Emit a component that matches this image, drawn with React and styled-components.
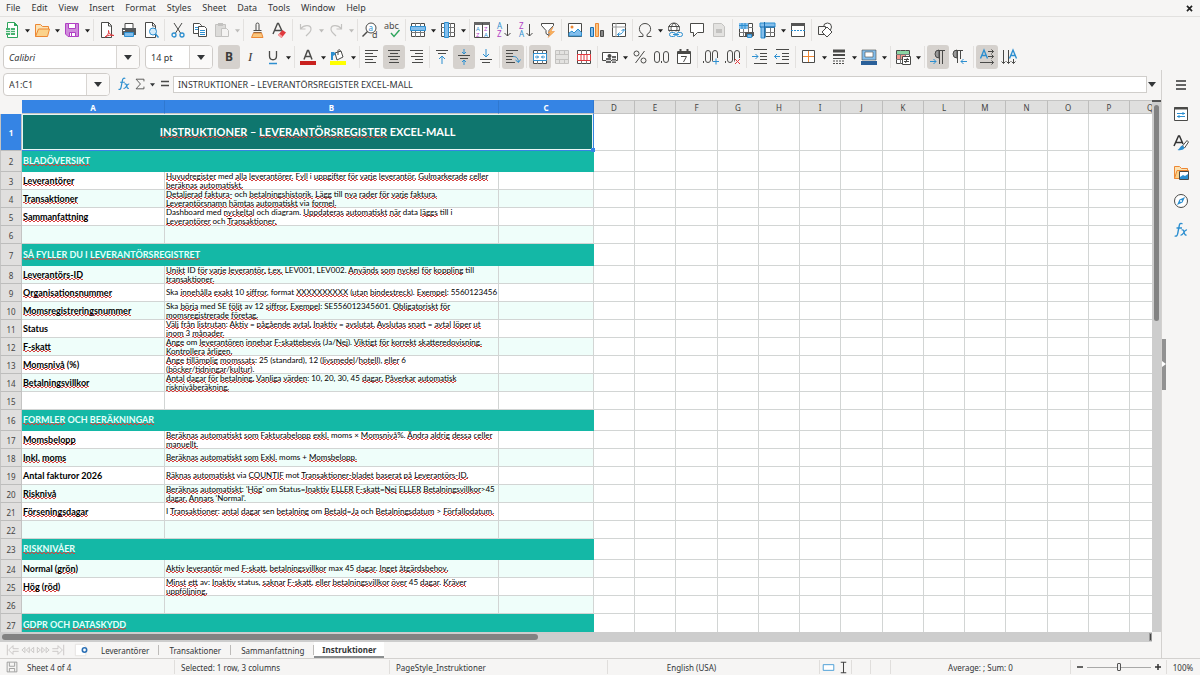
import React from 'react'
import styled, { createGlobalStyle } from 'styled-components'

const dark = '#4a4a48'
const blue = '#2d8fd0'
const pale = '#83beec'
const red = '#e0393e'
const orange = '#ed8733'
const purple = '#b13fc4'
const green = '#2ea55c'
const off = '#c3c2c0'

const GlobalStyle = createGlobalStyle`
    * {
        box-sizing: border-box;
    }
    body {
        margin: 0;
        background: #f6f5f4;
        color: #333638;
        font-family: "Noto Sans", sans-serif;
        font-size: 8px;
    }
    svg {
        overflow: visible;
    }
    button, input, select {
        font: inherit;
        color: inherit;
        margin: 0;
        padding: 0;
        border: 0;
        background: transparent;
        outline: none;
    }
`

const Window = styled.div`
    display: flex;
    flex-direction: column;
    height: 100vh;
    overflow: hidden;
`

const MenuBar = styled.nav`
    display: flex;
    flex: none;
    align-items: center;
    height: 16px;
    padding-left: 6px;
    gap: 11px;
    font-size: 9px;
`

const MenuItem = styled.button`
    line-height: 16px;
`

const CloseButton = styled.button`
    display: flex;
    margin: 0 6px 0 auto;
`

const Toolbar = styled.div`
    display: flex;
    flex: none;
    align-items: center;
    height: 27px;
    padding-left: ${props => props.$inset ? '3px' : '1px'};
    border-top: 1px solid ${props => props.$line ? '#e2e1df' : 'transparent'};
`

const ToolButton = styled.button`
    display: flex;
    flex: none;
    align-items: center;
    justify-content: center;
    width: 22px;
    height: 24px;
    border-radius: 3px;
    background: ${props => props.$active ? '#d5d1cd' : 'transparent'};
`

const MoreButton = styled.button`
    display: flex;
    flex: none;
    align-items: center;
    justify-content: center;
    width: 8px;
    height: 24px;
    color: ${props => props.disabled ? '#bdbcba' : '#222'};
`

const Separator = styled.span`
    flex: none;
    width: 1px;
    height: 22px;
    margin: ${props => props.$tight ? '0 1px 0 2px' : '0 2px'};
    background: #e3e1df;
`

const Combo = styled.div`
    display: grid;
    flex: none;
    grid-template-columns: 1fr 23px;
    width: ${props => props.width};
    height: ${props => props.$low ? '23px' : '24px'};
    margin-right: 5px;
    border: 1px solid #cfccc9;
    border-radius: 4px;
    background: #fff;
    font-size: 9px;
`

const ComboSelect = styled.select`
    grid-area: 1 / 1 / 2 / 3;
    appearance: none;
    padding-left: 5px;
    font-style: ${props => props.$italic ? 'italic' : 'normal'};
`

const ComboInput = styled.input`
    width: 100%;
    padding-left: 5px;
`

const ComboArrow = styled.span`
    display: flex;
    grid-area: 1 / 2 / 2 / 3;
    align-items: center;
    justify-content: center;
    border-left: 1px solid #d8d5d2;
    border-radius: 0 3px 3px 0;
    background: #faf9f8;
    pointer-events: none;
`

const ComboButton = styled.button`
    display: flex;
    align-items: center;
    justify-content: center;
    border-left: 1px solid #d8d5d2;
    border-radius: 0 3px 3px 0;
    background: #faf9f8;
`

const Workspace = styled.div`
    display: flex;
    flex: 1;
    min-height: 0;
    border-bottom: 1px solid #d3d1cf;
`

const Document = styled.main`
    display: flex;
    flex: 1;
    flex-direction: column;
    min-width: 0;
`

const FormulaBar = styled.div`
    display: flex;
    flex: none;
    align-items: center;
    height: 30px;
    padding: 0 4px 2px 3px;
`

const FormulaButton = styled.button`
    display: flex;
    flex: none;
    align-items: center;
    justify-content: center;
    width: ${props => props.width || '16px'};
    height: 22px;
`

const FormulaInput = styled.input`
    flex: 1;
    min-width: 0;
    height: 17px;
    padding: 0 4px;
    border: 1px solid #d0cecb;
    background: #fff;
    font-size: 9px;
`

const SheetArea = styled.div`
    display: grid;
    flex: 1;
    grid-template-columns: minmax(0, 1fr) 9px;
    grid-template-rows: minmax(0, 1fr) 10px;
    min-height: 0;
`

const SheetView = styled.div`
    overflow: hidden;
    background: #fff;
`

const Sheet = styled.table`
    table-layout: fixed;
    width: 1171px;
    border-collapse: separate;
    border-spacing: 0;
`

const ColumnHead = styled.th`
    height: 14px;
    padding: 0;
    border-right: 1px solid ${props => props.$selected ? '#2f78d0' : '#bdbdbc'};
    border-bottom: 1px solid #c4c4c3;
    border-top: 1px solid ${props => props.$selected ? '#3584e4' : '#c4c4c3'};
    background: ${props => props.$selected ? '#3584e4' : '#dfdfde'};
    color: ${props => props.$selected ? '#fff' : '#444'};
    font-weight: ${props => props.$selected ? '700' : '400'};
    line-height: 11px;
`

const Corner = styled.td`
    padding: 0;
    background: #f6f5f4;
`

const RowHead = styled.th`
    padding: 2px 0 0;
    border-right: 1px solid #c4c4c3;
    border-bottom: 1px solid #bdbdbc;
    border-left: 1px solid #c4c4c3;
    background: ${props => props.$selected ? '#3584e4' : '#e0dfde'};
    color: ${props => props.$selected ? '#fff' : '#444'};
    font-weight: ${props => props.$selected ? '700' : '400'};
    line-height: 10px;
`

const Row = styled.tr`
    height: ${props => props.$height}px;
`

const Cell = styled.td`
    padding: 0;
    border-right: 1px solid #d2d5d4;
    border-bottom: 1px solid #d2d5d4;
    background: ${props => props.$tinted ? '#effefa' : '#fff'};
`

const BannerCell = styled.td`
    padding: 0 1px 2px;
    background: #14b8a6;
    color: #e4fffa;
    font-family: Lato, sans-serif;
    font-size: 9px;
    font-weight: 700;
    line-height: 11px;
`

const TitleCell = styled.td`
    position: relative;
    padding: 0 0 2px;
    border-right: 1px solid #3584e4;
    border-bottom: 1px solid #3584e4;
    background: #0f766e;
    box-shadow: inset 0 0 0 1px #e8f6f4;
    color: #fff;
    font-family: Lato, sans-serif;
    font-size: 11px;
    font-weight: 700;
    text-align: center;
`

const FillHandle = styled.span`
    position: absolute;
    right: -2px;
    bottom: -2px;
    width: 4px;
    height: 4px;
    background: #3584e4;
`

const CellText = styled.div`
    display: flex;
    flex-direction: column;
    justify-content: center;
    height: 17px;
    padding-left: 1px;
    color: #000;
    font-family: Lato, sans-serif;
    font-size: ${props => props.$label ? '9px' : '8px'};
    font-weight: ${props => props.$label ? '700' : '400'};
    line-height: 9px;
    white-space: nowrap;
`

// two dashed rows, half a step apart, make the zigzag
const Misspelled = styled.span`
    background-image:
        repeating-linear-gradient(90deg, #d5403f 0 2px, transparent 2px 4px),
        repeating-linear-gradient(90deg, transparent 0 2px, #d5403f 2px 4px);
    background-position: 0 calc(100% - 1px), 0 100%;
    background-repeat: no-repeat;
    background-size: 100% 1px;
`

const VerticalScroll = styled.div`
    padding: 3px 2px 0;
    border-top: 2px solid #555;
    background: #cdcdcd;
`

const VerticalThumb = styled.div`
    width: 5px;
    height: 41%;
    border-radius: 3px;
    background: #828282;
`

const HorizontalScroll = styled.div`
    display: flex;
    align-items: center;
    justify-content: space-between;
    padding: 0 0 0 2px;
    background: #cdcdcd;
`

const HorizontalThumb = styled.div`
    width: 46.6%;
    height: 6px;
    border-radius: 3px;
    background: #828282;
`

const ScrollEnd = styled.span`
    width: 3px;
    height: 8px;
    border: 1px solid #999;
    background: #444;
`

const TabBar = styled.div`
    display: flex;
    flex: none;
    align-items: stretch;
    height: 16px;
`

const TabNav = styled.div`
    display: flex;
    align-items: center;
    gap: 1px;
    width: 91px;
    padding-left: 6px;
`

const NavButton = styled.button`
    display: flex;
    margin-left: ${props => props.$apart ? '8px' : '0'};
`

const Tab = styled.button`
    margin: 3px 0;
    padding: 0 9px 0 10px;
    border-right: 1px solid #bdbbb9;
    line-height: 9px;

    &[aria-selected="true"] {
        margin: 0;
        padding: 0 8px;
        border-right: 0;
        border-bottom: 2px solid #8b8e8f;
        background: #fff;
        font-weight: 700;
    }
`

const SideBar = styled.aside`
    display: flex;
    flex: none;
    width: 39px;
    border-left: 1px solid #d3d1cf;
`

const SideHandle = styled.button`
    display: flex;
    align-items: center;
    align-self: center;
    justify-content: center;
    width: 4px;
    height: 51px;
    background: #929292;
    color: #fff;
`

const SideDeck = styled.div`
    display: flex;
    flex: 1;
    flex-direction: column;
    align-items: center;
    gap: 5px;
    padding: 3px 4px 0 0;
`

const StatusBar = styled.footer`
    display: grid;
    flex: none;
    grid-template-columns: 175fr 215fr 218fr 168fr 44fr 32fr 19fr 20fr 180fr 96fr 33fr;
    align-items: center;
    height: 16px;
`

const StatusCell = styled.div`
    display: flex;
    align-items: center;
    justify-content: ${props => props.$center ? 'center' : 'flex-start'};
    gap: ${props => props.$center ? '3px' : '9px'};
    min-width: 0;
    height: 14px;
    padding-left: ${props => props.$center ? '0' : '6px'};
    border-right: 1px solid ${props => props.$last ? 'transparent' : '#e0dedc'};
    white-space: nowrap;
`

const ZoomSlider = styled.input`
    appearance: none;
    width: 64px;
    height: 9px;
    background: linear-gradient(#a9a9a8, #a9a9a8) center / 100% 1px no-repeat;

    &::-webkit-slider-thumb {
        appearance: none;
        width: 4px;
        height: 8px;
        border: 1px solid #555;
        border-radius: 1px;
        background: #eee;
    }
`

const ZoomButton = styled.button`
    display: flex;
`

const lines = (d, color = dark, width = 1) => (
    <path d={d} fill="none" stroke={color} strokeWidth={width} />
)

const glyph = (text, x, y, size, color, family = 'Noto Sans') => (
    <text x={x} y={y} fontSize={size} fill={color} fontFamily={`${family}, sans-serif`}>{text}</text>
)

const gridBox = <>
    <path d="M1.5 1.5h13v13h-13z" fill="#fff" stroke={dark} />
    {lines('M1 5.5h14M1 10.5h14M5.5 1v14M10.5 1v14', '#777')}
</>

const icons = {
    new: <>
        <path d="M3.5.5h7l3 3v12h-10z" fill="#fff" stroke={green} />
        <path d="M10 0v4h4z" fill={green} />
        <path d="M2 6h9v7H2z" fill="#4ab272" />
        {lines('M2 8.5h9M2 10.5h9M6.5 6v7', '#d9f2e2')}
    </>,
    open: <>
        <path d="M1.5 14.5v-12h5l2 2h6v3" fill="#fbe3b5" stroke={orange} />
        <path d="M1.5 14.5l3-7.5h11l-2 7.5z" fill="#fbd28b" stroke={orange} />
    </>,
    save: <>
        <path d="M1.5 1.5h13v13H4L1.5 12z" fill="#cf8bdb" stroke={purple} />
        <path d="M4.5 1.5h7v5h-7z" fill="#fff" stroke={purple} />
        <path d="M5.5 10.5h6v4h-6z" fill="#fff" stroke={purple} />
        {lines('M7.5 11v3', purple)}
    </>,
    pdf: <>
        <path d="M2.5.5h7l3 3v12h-10z" fill="#fff" stroke={dark} />
        {lines('M9.5 0v4h3')}
        {lines('M6 15c3-1.500 4-4 3.500-6.500 0 3 2.500 5 5.500 5-3-.5-6-.5-9 1.500z', red)}
    </>,
    print: <>
        <path d="M4 1.5h8v5H4z" fill="#fff" stroke={dark} />
        <path d="M1 6h14v7H1z" fill="#55585a" />
        <path d="M3.5 10.5h9v4h-9z" fill={pale} stroke={blue} />
        <path d="M2 8h2v1H2z" fill="#fff" />
    </>,
    preview: <>
        <path d="M2.5.5h7l3 3v12h-10z" fill="#fff" stroke={dark} />
        {lines('M9.5 0v4h3')}
        <circle cx="10" cy="9.5" r="3.5" fill="#d4ebfa" stroke={blue} />
        {lines('M12.5 12l3 3.5', blue, 1.5)}
    </>,
    cut: <>
        {lines('M4 1l6.500 10M12 1L5.500 11')}
        <circle cx="4" cy="13" r="2" fill="none" stroke={blue} strokeWidth="1.3" />
        <circle cx="12" cy="13" r="2" fill="none" stroke={blue} strokeWidth="1.3" />
    </>,
    copy: <>
        <path d="M1.5 1.5h6l2 2v8h-8z" fill="#fff" stroke={dark} />
        {lines('M3 5.5h3M3 7.5h3', blue)}
        <path d="M6.5 4.5h6l2 2v8h-8z" fill="#fff" stroke={dark} />
        {lines('M8 8.5h5M8 10.5h5M8 12.5h5', blue)}
    </>,
    paste: <>
        <path d="M1.5 2.5h10v12h-10z" fill="#dcdbd9" stroke={off} />
        <path d="M4 1h5v3H4z" fill={off} />
        <path d="M7.5 6.5h5l2 2v6h-7z" fill="#f4f3f2" stroke={off} />
    </>,
    brush: <>
        {lines('M7 8V2.500a1.500 1.500 0 013 0V8')}
        {lines('M4.5 8.5h8M4.5 10.5h8')}
        <path d="M4.5 11l-2 4.5H14L12.500 11z" fill="#f9c77f" stroke={orange} />
    </>,
    clear: <>
        {lines('M2 12L6.500 1.500h1L11.500 10M4 8.500h6', dark, 1.4)}
        <path d="M7 13l4.500-5L15 10.500 10.500 16z" fill={red} />
        <path d="M7 13l1.200-1.500 3.500 2.800L10.500 16z" fill="#f7a1a3" />
    </>,
    undo: lines('M2.500 2v5h5M3 6.500c3-4 10-4 10 .5 0 3-3 5-5 7', off, 1.2),
    redo: lines('M13.500 2v5h-5M13 6.500c-3-4-10-4-10 .5 0 3 3 5 5 7', off, 1.2),
    find: <>
        <circle cx="9" cy="6" r="5" fill="#fff" stroke={dark} />
        {lines('M5.500 9.500L.5 14.500', dark, 1.5)}
        {glyph('a', 6.5, 8.5, 8, blue)}
        {glyph('d', 10, 15.5, 9, dark)}
    </>,
    spell: <>
        {glyph('abc', 0, 7, 9, dark)}
        {lines('M7 11l3 3.500 5.500-6.500', green, 1.4)}
    </>,
    row: <>
        {gridBox}
        <path d="M.5 4.500h15v4H.5z" fill={pale} stroke={blue} />
    </>,
    column: <>
        {gridBox}
        <path d="M4.500.5h4v15h-4z" fill={pale} stroke={blue} />
    </>,
    sort: <>
        <path d="M.5.5h15v15H.5z" fill="#fff" stroke={dark} />
        <path d="M0 0h16v3H0z" fill="#666" />
        {lines('M8.500 1v15')}
        {glyph('A', 2, 9, 6, blue)}
        {glyph('Z', 2, 15, 6, purple)}
        {glyph('Z', 10, 9, 6, purple)}
        {glyph('A', 10, 15, 6, blue)}
    </>,
    ascending: <>
        {glyph('A', 1, 7, 8, blue)}
        {glyph('Z', 1, 15, 8, purple)}
        {lines('M11.500 2v12M8.500 11l3 3 3-3')}
    </>,
    descending: <>
        {glyph('Z', 1, 7, 8, purple)}
        {glyph('A', 1, 15, 8, blue)}
        {lines('M11.500 2v12M8.500 11l3 3 3-3')}
    </>,
    filter: <>
        <path d="M1.500 1.500h12v2L9 8.500v5l-3-2v-3l-4.500-5z" fill="#fff" stroke={dark} />
        <path d="M13 5l-5 6h3l-3 4.500 6.500-6H11z" fill="#f9b55c" stroke={orange} strokeWidth=".5" />
    </>,
    image: <>
        <path d="M1.5 1.5h13v13h-13z" fill="#fff" stroke={dark} />
        <circle cx="5" cy="5" r="1.5" fill={orange} />
        <path d="M2 14v-3l3-2 2 2 4-4 3.500 3.500V14z" fill={pale} stroke={blue} />
    </>,
    chart: <>
        <path d="M1.5 5.5h3v9h-3z" fill={pale} stroke="#1a6fb0" />
        <path d="M6.5 1.5h3v13h-3z" fill="#fac481" stroke={orange} />
        <path d="M11.5 8.5h3v6h-3z" fill="#888" stroke={dark} />
    </>,
    pivot: <>
        <path d="M1.5 1.5h13v13h-13z" fill="#fff" stroke={dark} />
        {lines('M5 1v14M1 5h14', '#999')}
        {lines('M6.500 12.500c4 0 6-2 6-5M10.500 9l2-2 2 2M8.500 10.500l-2 2 2 2', blue)}
    </>,
    omega: lines('M1.500 14.500H6v-2C0 9 2 1.500 8 1.500s8 7.500 2 11v2h4.500'),
    link: <>
        <circle cx="7" cy="6.5" r="5.5" fill="#fff" stroke={dark} />
        {lines('M1.500 4.500h11M1.500 8.500h11M7 1C3 5 3 8 7 12M7 1c4 4 4 7 0 11')}
        <path d="M2 9.500h14V16H2z" fill="#f6f5f4" />
        <rect x="2.5" y="10.5" width="6" height="4" rx="2" fill="none" stroke={blue} />
        <rect x="9.5" y="10.5" width="6" height="4" rx="2" fill="none" stroke={blue} />
        {lines('M6 12.500h6', blue)}
    </>,
    comment: <path d="M1.5 1.5h13v9h-6l-4 4v-4h-3z" fill="#fff" stroke={dark} />,
    header: <>
        <path d="M2.5 1.5h8l3 3v10h-11z" fill="#e3e2e0" stroke={off} />
        <path d="M5 7h6v4H5z" fill={off} />
    </>,
    printarea: <>
        {gridBox}
        <path d="M1 1h9v6H1z" fill={pale} />
        {lines('M1 3.500h9M4 1v6M7 1v6', blue)}
        <path d="M7 10h9v4H7z" fill="#555" />
        <path d="M9.5 12.5h4v3h-4z" fill={pale} stroke={blue} />
    </>,
    freeze: <>
        {gridBox}
        <path d="M0 1h15v4H5v11H1V5H0z" fill={pale} stroke={blue} />
        {lines('M4.500 0v16M0 5h15', '#1a6fb0')}
    </>,
    split: <>
        <path d="M1.5 1.5h13v13h-13z" fill="#fff" stroke={dark} />
        <path d="M1 1h14v3H1z" fill="#555" />
        <path d="M1 8.500h14" stroke={blue} strokeDasharray="2 1" />
    </>,
    shapes: <>
        <circle cx="10.5" cy="5" r="4" fill="#fff" stroke={dark} />
        <path d="M1.5 4.5h7v8h-7z" fill="#f6f5f4" stroke={dark} />
        <path d="M10 5l5 5-5 5-5-5z" fill="#fff" stroke={dark} />
    </>,
    bold: <text x="4" y="12" fontSize="12" fontWeight="700" fill="#3c3c3a" fontFamily="Noto Sans, sans-serif">B</text>,
    italic: <text x="5" y="12" fontSize="13" fontStyle="italic" fill="#3c3c3a" fontFamily="Liberation Serif, serif">I</text>,
    underline: <>
        {lines('M4.500 2v5c0 5 7 5 7 0V2', dark, 1.3)}
        {lines('M4 14.500h8', blue, 1.5)}
    </>,
    fontcolor: <>
        {lines('M4 10.500L7.500 1.500h1L12 10.500M5.500 7.500h5', dark, 1.5)}
        <path d="M0 12h16v4H0z" fill="#c9211e" />
    </>,
    fill: <>
        <path d="M5 4l6-2 2 6-6 3z" fill="#fff" stroke={dark} />
        {lines('M8 6V1.500c1-1.500 2-1 2.500 1')}
        <path d="M1 3h3l2 2-3 2v4H1z" fill={blue} />
        <path d="M0 12h16v4H0z" fill="#ffff00" />
    </>,
    left: lines('M1 1.500h13M1 4.500h8M1 7.500h12M1 10.500h8M1 13.500h11'),
    center: lines('M2 1.500h12M4 4.500h8M2 7.500h12M4 10.500h8M3 13.500h10'),
    right: lines('M2 1.500h13M7 4.500h8M3 7.500h12M7 10.500h8M4 13.500h11'),
    top: <>
        {lines('M2 1.500h12M4 4.500h8')}
        {lines('M8 15V7.500M5 10l3-3 3 3', blue)}
    </>,
    middle: <>
        {lines('M2 6.500h12M4 9.500h8')}
        {lines('M8 0v5M6 3l2 2 2-2M8 16v-5M6 13l2-2 2 2', blue)}
    </>,
    bottom: <>
        {lines('M2 10.500h12M4 13.500h8')}
        {lines('M8 0v8M5 5l3 3 3-3', blue)}
    </>,
    wrap: <>
        {lines('M1 1.500h12M1 4.500h7M1 7.500h7M1 10.500h6M1 13.500h9')}
        {lines('M8 7.500c4 0 5 2 5.500 5.500M10.500 11l3 2.500 2-3', blue)}
    </>,
    merge: <>
        {gridBox}
        <path d="M1.500 4.500h13v7h-13z" fill="#fff" stroke={blue} />
        {lines('M3 8h3.500M13 8H9.500M5 6.500L6.500 8 5 9.500M11 6.500L9.500 8l1.500 1.500', blue)}
    </>,
    mergeoff: <>
        <path d="M1.5 1.5h13v13h-13z" fill="#e3e2e0" stroke={off} />
        {lines('M1 5.500h14M1 10.500h14M5.500 2v3M10.500 2v3M5.500 11v3M10.500 11v3', off)}
    </>,
    unmerge: <>
        {gridBox}
        <path d="M1.500 5.500h13v6h-13z" fill="#fff" stroke={red} />
        {lines('M5 5v7M8 5v7M11 5v7', red)}
    </>,
    currency: <>
        <path d="M.5 3.500h15v8H.5z" fill="#fff" stroke={dark} />
        <circle cx="7.5" cy="7" r="2" fill={dark} />
        <path d="M4 9h5v5H4zM10 7h4v7h-4z" fill="#666" />
        {lines('M4 11.500h5M10 9.500h4M10 12h4', '#ddd')}
    </>,
    percent: <>
        <circle cx="4.5" cy="4.5" r="2.5" fill="none" stroke={dark} />
        <circle cx="11.5" cy="11.5" r="2.5" fill="none" stroke={dark} />
        {lines('M12.500 2L3.500 14')}
    </>,
    number: <>
        <rect x=".5" y="2.5" width="5" height="11" rx="2.5" fill="none" stroke={dark} />
        <rect x="9.5" y="2.5" width="5" height="11" rx="2.5" fill="none" stroke={dark} />
        {lines('M7.500 12v2')}
    </>,
    date: <>
        <path d="M1.5 2.5h13v12h-13z" fill="#fff" stroke={dark} />
        {lines('M1 4h14M4.500 0v3M11.500 0v3', dark, 2)}
        {lines('M5 7.500h5.500L7.500 13')}
    </>,
    adddecimal: <>
        {lines('M.5 12v2')}
        <rect x="2.5" y="1.5" width="5" height="12" rx="2.5" fill="none" stroke={dark} />
        <rect x="9.5" y="1.5" width="5" height="12" rx="2.5" fill="none" stroke={dark} />
        <path d="M10 9h7v7h-7z" fill="#f6f5f4" />
        {lines('M13 9.500v6M10 12.500h6', blue)}
    </>,
    removedecimal: <>
        {lines('M.5 12v2')}
        <rect x="2.5" y="1.5" width="5" height="12" rx="2.5" fill="none" stroke={dark} />
        <rect x="9.5" y="1.5" width="5" height="12" rx="2.5" fill="none" stroke={dark} />
        <path d="M10 9h7v7h-7z" fill="#f6f5f4" />
        {lines('M10 10l5 5M15 10l-5 5', red)}
    </>,
    indent: <>
        {lines('M2 .5h13M8 4.500h7M8 7.500h7M8 10.500h7M2 14.500h13')}
        {lines('M0 7.500h6M3.500 5L6 7.500 3.500 10', blue)}
    </>,
    outdent: <>
        {lines('M2 .5h13M8 4.500h7M8 7.500h7M8 10.500h7M2 14.500h13')}
        {lines('M6 7.500H.5M3 5L.5 7.500 3 10', blue)}
    </>,
    borders: <>
        <path d="M1.5 1.5h12v12h-12z" fill="#fff" stroke={dark} />
        {lines('M7.500 2v11M2 7.500h11', orange)}
    </>,
    borderstyle: <>
        {lines('M2 2h12', dark, 3)}
        {lines('M2 6h12', dark, 2)}
        {lines('M2 9.500h12')}
        <path d="M2 12h12M2 14.500h12" stroke={dark} strokeDasharray="2 1" />
    </>,
    bordercolor: <>
        <path d="M2.500 1.500h11v8h-11z" fill="#fff" stroke={dark} />
        <path d="M1 1h14v10H1zM4 3v5h8V3z" fill={pale} fillRule="evenodd" stroke={dark} strokeWidth=".6" />
        <path d="M0 12h16v4H0z" fill="#2a6099" />
    </>,
    conditional: <>
        {gridBox}
        <path d="M2 2h12v3H2z" fill="#8bd6a4" />
        <path d="M2 6h3v4H2zM6 6h4v4H6z" fill="#f59a90" />
        <path d="M7.5 7.5h8v8h-8z" fill="#fff" stroke={dark} />
        {lines('M9 10.500h5M9 12.500h5M12.500 9l-2 5')}
    </>,
    ltr: <>
        <path d="M9 1a4 4 0 000 8z" fill="#999" stroke={dark} />
        {lines('M8 1.500h7M9.500 1v14M12.500 1v14')}
        {lines('M0 12.500h6M3.500 10L6 12.500 3.500 15', blue)}
    </>,
    rtl: <>
        <path d="M5 1a4 4 0 000 8z" fill="#999" stroke={dark} />
        {lines('M4 1.500h7M5.500 1v13M8.500 1v9')}
        {lines('M15 12.500H9M11.500 10L9 12.500l2.500 2.500', blue)}
    </>,
    horizontal: <>
        {lines('M1.500 9.500L5 1l3.500 8.500M2.500 6.500h5', blue, 1.4)}
        {lines('M9 2.500h5.500M9 7.500h5.500M1 13.500h13.500M12.500.500l2 2-2 2M12.500 5.500l2 2-2 2M12.500 11.500l2 2-2 2')}
    </>,
    vertical: <>
        {lines('M2.500 1v13.500M7.500 1v13.500M12.500 10v4.500M.5 12.500l2 2 2-2M5.500 12.500l2 2 2-2M10.500 12.500l2 2 2-2')}
        {lines('M8.500 9.500L12 1l3.500 8.500M9.500 6.500h5', blue, 1.4)}
    </>,
    functions: <>
        {lines('M9.500 1.800c-2-1-3 0-3.300 2L4.700 11.500c-.4 2.500-1.500 3-3 2.500M3.500 6h5.500', blue, 1.4)}
        {lines('M8.500 8c1.500-.5 2 0 2.500 2s1 3.500 2.500 2.800M14 8c-1.500-.3-2 .5-3 2.300S9 13.500 7.500 13', blue, 1.3)}
    </>,
    sigma: lines('M12.500 5V2.500h-9L8.500 8l-5 5.500h9V11'),
    equals: lines('M4 5.500h8M4 9.500h8', dark, 1.5),
    menu: lines('M3 4h10M3 8h10M3 12h10', '#333', 1.6),
    properties: <>
        <path d="M1.5 1.5h13v13h-13z" fill="#fff" stroke={dark} />
        {lines('M1 2.500h14', dark, 2)}
        {lines('M4 7.500h8M4 10.500h8M10 6v3M6 9v3', blue)}
    </>,
    styles: <>
        {lines('M1 11L5.500 1h1L10 9M3 7.500h6', '#333', 1.5)}
        <path d="M9.500 11L14 5.500 15.500 7l-4 6z" fill="#fff" stroke={dark} />
        <path d="M9.500 10.500l2 2.500c-1 2-4 2.500-7 2 2-1 3-4.500 5-4.500z" fill={blue} />
    </>,
    gallery: <>
        <path d="M1.500 14.500v-12h5l2 2h6v3" fill="#fbe3b5" stroke={orange} />
        <path d="M1.500 14.500L4 6.500h11.500v8z" fill="#fbd28b" stroke={orange} />
        <path d="M6.500 7.500h9v8h-9z" fill="#fff" stroke={dark} />
        <path d="M7 15v-2l3-2 2 1 3-2v5z" fill={blue} />
    </>,
    navigator: <>
        <circle cx="8" cy="8" r="6.5" fill="#fff" stroke={dark} />
        <path d="M12 4L9.500 9.500 4 12l2.500-5.500z" fill={blue} />
        <circle cx="8" cy="8" r="1" fill="#fff" />
    </>,
    first: lines('M1.500 2v12M14.500 6.500H8V3L3 8l5 5V9.500h6.500', '#c6c4c2'),
    previous: lines('M14.500 5L11 8l3.500 3V5zM9.500 5L6 8l3.500 3V5zM4.500 5L1 8l3.500 3V5z', '#c6c4c2'),
    next: lines('M1.500 5L5 8l-3.500 3V5zM6.500 5L10 8l-3.500 3V5zM11.500 5L15 8l-3.500 3V5z', '#c6c4c2'),
    last: lines('M14.500 2v12M1.500 6.500H8V3l5 5-5 5V9.500H1.500', '#c6c4c2'),
    addsheet: <>
        <path d="M1.500 1.500h9l3 3v10h-12z" fill="#fff" stroke="#e3e1df" />
        <circle cx="12" cy="8" r="2.5" fill="#fff" stroke="#2a6fb5" strokeWidth="1.800" />
    </>,
    saved: <>
        <path d="M1.500 1.500h13v13h-13z" fill="none" stroke="#888" />
        {lines('M4.500 2v5h7V2M4.500 14v-4h7v4', '#888')}
    </>,
    selection: <path d="M1.500 4.500h13v7h-13z" fill="#fff" stroke={blue} />,
    cursor: lines('M4 .5h8M4 15.500h8M8 0v16', '#444', 1.5),
    close: lines('M3.500 3.500l9 9M12.500 3.500l-9 9', '#222', 3),
    minus: lines('M2 8h12', '#333', 3),
    plus: lines('M2 8h12M8 2v12', '#333', 3),
}

const Icon = ({ name, size = 16 }) => (
    <svg width={size} height={size} viewBox="0 0 16 16" aria-hidden="true">{icons[name]}</svg>
)

const Arrow = ({ size = 6 }) => (
    <svg width={size} height={size} viewBox="0 0 8 8" aria-hidden="true">
        <path d="M0 2h8L4 7z" fill="currentColor" />
    </svg>
)

// "name" is a button, "name+" a button with a menu, "|" a separator, ";" a tight one
const standardTools = 'new+ open+ save+ | pdf print preview | cut copy paste+ | brush clear | undo+ redo+ ; find spell ; row+ column+ ; sort ascending descending filter | image chart pivot ; omega+ link comment header | printarea freeze+ split | shapes'
const formatTools = 'bold italic underline+ | fontcolor+ fill+ ; left center right ; top middle bottom | wrap | merge mergeoff unmerge ; currency+ percent number date | adddecimal removedecimal | indent outdent | borders+ borderstyle+ bordercolor+ ; conditional+ | ltr rtl | horizontal vertical'
const active = ['bold', 'center', 'middle', 'wrap', 'merge', 'ltr', 'horizontal']
const disabled = ['paste', 'undo', 'redo', 'header', 'mergeoff']

const Tools = ({ items }) => items.split(' ').map((item, i) => {
    if (item === '|' || item === ';') return <Separator key={i} $tight={item === ';'} />
    const name = item.replace('+', '')
    const isOff = disabled.includes(name)
    return (
        <React.Fragment key={i}>
            <ToolButton aria-label={name} $active={active.includes(name)} disabled={isOff}>
                <Icon name={name} />
            </ToolButton>
            {item.endsWith('+') && <MoreButton aria-label={`${name} options`} disabled={isOff}><Arrow size={5} /></MoreButton>}
        </React.Fragment>
    )
})

const menus = ['File', 'Edit', 'View', 'Insert', 'Format', 'Styles', 'Sheet', 'Data', 'Tools', 'Window', 'Help']
const columns = 'ABCDEFGHIJKLMNOPQ'.split('')
const columnWidths = [143, 334, 95, 41, 41, 42, 41, 41, 41, 42, 41, 41, 41, 42, 41, 41, 41]

// words in brackets are underlined by the spell checker
const rows = [
    { title: '[INSTRUKTIONER] – [LEVERANTÖRSREGISTER] EXCEL-MALL', height: 37 },
    { banner: '[BLADÖVERSIKT]', height: 21 },
    { label: '[Leverantörer]', text: ['[Huvudregister] med [alla] [leverantörer.] [Fyll] i [uppgifter] [för] [varje] [leverantör.] [Gulmarkerade] [celler]', '[beräknas] [automatiskt.]'] },
    { label: '[Transaktioner]', text: ['[Detaljerad] [faktura-] och [betalningshistorik.] [Lägg] till [nya] [rader] [för] [varje] [faktura.]', '[Leverantörsnamn] [hämtas] [automatiskt] via [formel.]'] },
    { label: '[Sammanfattning]', text: ['Dashboard med [nyckeltal] och diagram. [Uppdateras] [automatiskt] [när] data [läggs] till i', '[Leverantörer] och [Transaktioner.]'] },
    {},
    { banner: '[SÅ] [FYLLER] DU I [LEVERANTÖRSREGISTRET]', height: 22 },
    { label: '[Leverantörs-ID]', text: ['[Unikt] ID [för] [varje] [leverantör,] [t.ex.] LEV001, LEV002. [Används] [som] [nyckel] [för] [koppling] till', '[transaktioner.]'] },
    { label: '[Organisationsnummer]', text: ['Ska [innehålla] [exakt] 10 [siffror], format [XXXXXXXXXX] ([utan] [bindestreck]). [Exempel]: 5560123456'] },
    { label: '[Momsregistreringsnummer]', text: ['Ska [börja] med SE [följt] av 12 [siffror.] [Exempel]: SE556012345601. [Obligatoriskt] [för]', '[momsregistrerade] [företag.]'] },
    { label: 'Status', text: ['[Välj] [från] [listrutan]: [Aktiv] = [pågående] [avtal,] [Inaktiv] = [avslutat.] [Avslutas] [snart] = [avtal] [löper] [ut]', '[inom] 3 [månader.]'] },
    { label: '[F-skatt]', text: ['[Ange] om [leverantören] [innehar] [F-skattebevis] (Ja/[Nej]). [Viktigt] [för] [korrekt] [skatteredovisning.]', '[Kontrollera] [årligen.]'] },
    { label: '[Momsnivå] (%)', text: ['[Ange] [tillämplig] [momssats]: 25 (standard), 12 ([livsmedel]/[hotell]), [eller] 6', '([böcker]/[tidningar]/[kultur]).'] },
    { label: '[Betalningsvillkor]', text: ['[Antal] [dagar] [för] [betalning.] [Vanliga] [värden]: 10, 20, 30, 45 [dagar.] [Påverkar] [automatisk]', '[risknivåberäkning.]'] },
    {},
    { banner: '[FORMLER] OCH [BERÄKNINGAR]', height: 21 },
    { label: '[Momsbelopp]', text: ['[Beräknas] [automatiskt] [som] [Fakturabelopp] [exkl.] moms × [Momsnivå]%. [Ändra] [aldrig] [dessa] [celler]', '[manuellt.]'] },
    { label: '[Inkl.] [moms]', text: ['[Beräknas] [automatiskt] [som] [Exkl.] moms + [Momsbelopp.]'] },
    { label: 'Antal fakturor 2026', text: ['[Räknas] [automatiskt] via [COUNTIF] mot [Transaktioner-bladet] [baserat] [på] [Leverantörs-ID.]'] },
    { label: '[Risknivå]', text: ["[Beräknas] [automatiskt]: '[Hög]' om Status=[Inaktiv] [ELLER] [F-skatt]=[Nej] [ELLER] [Betalningsvillkor]>45", "[dagar.] [Annars] 'Normal'."] },
    { label: '[Förseningsdagar]', text: ['I [Transaktioner]: [antal] [dagar] sen [betalning] om [Betald]=[Ja] och [Betalningsdatum] > [Förfallodatum.]'] },
    {},
    { banner: '[RISKNIVÅER]', height: 21 },
    { label: 'Normal ([grön])', text: ['[Aktiv] [leverantör] med [F-skatt], [betalningsvillkor] max 45 [dagar]. [Inget] [åtgärdsbehov.]'] },
    { label: '[Hög] ([röd])', text: ['[Minst] [ett] av: [Inaktiv] status, [saknar] [F-skatt], [eller] [betalningsvillkor] [över] 45 [dagar]. [Kräver]', '[uppföljning.]'] },
    {},
    { banner: '[GDPR] OCH [DATASKYDD]', height: 22 },
]

const Checked = ({ text }) => (
    <span>
        {text.split(/\[([^\]]+)\]/).map((part, i) => i % 2 ? <Misspelled key={i}>{part}</Misspelled> : part)}
    </span>
)

const RowCells = ({ row, index }) => {
    if (row.title) return <TitleCell colSpan={3}><Checked text={row.title} /><FillHandle /></TitleCell>
    if (row.banner) return <BannerCell colSpan={3}><Checked text={row.banner} /></BannerCell>
    const tinted = index % 2 === 1
    return (
        <>
            <Cell $tinted={tinted}>
                {row.label && <CellText $label><Checked text={row.label} /></CellText>}
            </Cell>
            <Cell $tinted={tinted}>
                {row.text && <CellText>{row.text.map(line => <Checked key={line} text={line} />)}</CellText>}
            </Cell>
            <Cell $tinted={tinted} />
        </>
    )
}

const Spreadsheet = () => (
    <Sheet>
        <colgroup>
            <col style={{ width: 22 }} />
            {columnWidths.map((width, i) => <col key={i} style={{ width }} />)}
        </colgroup>
        <thead>
            <tr>
                <Corner />
                {columns.map((name, i) => <ColumnHead key={name} scope="col" $selected={i < 3}>{name}</ColumnHead>)}
            </tr>
        </thead>
        <tbody>
            {rows.map((row, i) => (
                <Row key={i} $height={row.height || 18}>
                    <RowHead scope="row" $selected={i === 0}>{i + 1}</RowHead>
                    <RowCells row={row} index={i} />
                    {columns.slice(3).map(name => <Cell key={name} />)}
                </Row>
            ))}
        </tbody>
    </Sheet>
)

const App = () => (
    <Window>
        <GlobalStyle />
        <MenuBar>
            {menus.map(name => <MenuItem key={name}>{name}</MenuItem>)}
            <CloseButton aria-label="Close document"><Icon name="close" size={9} /></CloseButton>
        </MenuBar>
        <Toolbar $line><Tools items={standardTools} /></Toolbar>
        <Toolbar $inset>
            <Combo width="137px">
                <ComboSelect aria-label="Font name" $italic><option>Calibri</option></ComboSelect>
                <ComboArrow><Arrow size={8} /></ComboArrow>
            </Combo>
            <Combo width="68px">
                <ComboSelect aria-label="Font size"><option>14 pt</option></ComboSelect>
                <ComboArrow><Arrow size={8} /></ComboArrow>
            </Combo>
            <Tools items={formatTools} />
        </Toolbar>
        <Workspace>
            <Document>
                <FormulaBar>
                    <Combo width="107px" $low>
                        <ComboInput aria-label="Name box" defaultValue="A1:C1" />
                        <ComboButton aria-label="Named ranges"><Arrow size={8} /></ComboButton>
                    </Combo>
                    <FormulaButton aria-label="Function wizard" width="18px"><Icon name="functions" size={14} /></FormulaButton>
                    <FormulaButton aria-label="Sum" width="14px"><Icon name="sigma" size={14} /></FormulaButton>
                    <FormulaButton aria-label="Sum options" width="10px"><Arrow size={5} /></FormulaButton>
                    <FormulaButton aria-label="Formula"><Icon name="equals" /></FormulaButton>
                    <FormulaInput aria-label="Input line" defaultValue="INSTRUKTIONER – LEVERANTÖRSREGISTER EXCEL-MALL" />
                    <FormulaButton aria-label="Expand formula bar" width="10px"><Arrow size={8} /></FormulaButton>
                </FormulaBar>
                <SheetArea>
                    <SheetView><Spreadsheet /></SheetView>
                    <VerticalScroll><VerticalThumb /></VerticalScroll>
                    <HorizontalScroll><HorizontalThumb /><ScrollEnd /></HorizontalScroll>
                </SheetArea>
                <TabBar>
                    <TabNav>
                        {['first', 'previous', 'next', 'last'].map(name => (
                            <NavButton key={name} aria-label={`${name} sheet`}><Icon name={name} size={14} /></NavButton>
                        ))}
                        <NavButton aria-label="Add sheet" $apart><Icon name="addsheet" size={14} /></NavButton>
                    </TabNav>
                    {['Leverantörer', 'Transaktioner', 'Sammanfattning', 'Instruktioner'].map(name => (
                        <Tab key={name} role="tab" aria-selected={name === 'Instruktioner'}>{name}</Tab>
                    ))}
                </TabBar>
            </Document>
            <SideBar>
                <SideHandle aria-label="Hide sidebar"><svg width="4" height="6" viewBox="0 0 4 6"><path d="M0 0l4 3-4 3z" fill="currentColor" /></svg></SideHandle>
                <SideDeck>
                    {['menu', 'properties', 'styles', 'gallery', 'navigator', 'functions'].map(name => (
                        <ToolButton key={name} aria-label={name}><Icon name={name} /></ToolButton>
                    ))}
                </SideDeck>
            </SideBar>
        </Workspace>
        <StatusBar>
            <StatusCell><Icon name="saved" size={12} /> Sheet 4 of 4</StatusCell>
            <StatusCell>Selected: 1 row, 3 columns</StatusCell>
            <StatusCell>PageStyle_Instruktioner</StatusCell>
            <StatusCell $center $last>English (USA)</StatusCell>
            <StatusCell />
            <StatusCell $center><Icon name="selection" size={13} /><Icon name="cursor" size={11} /></StatusCell>
            <StatusCell />
            <StatusCell />
            <StatusCell $center>Average: ; Sum: 0</StatusCell>
            <StatusCell $center>
                <ZoomButton aria-label="Zoom out"><Icon name="minus" size={8} /></ZoomButton>
                <ZoomSlider type="range" aria-label="Zoom" defaultValue="50" />
                <ZoomButton aria-label="Zoom in"><Icon name="plus" size={8} /></ZoomButton>
            </StatusCell>
            <StatusCell $center $last>100%</StatusCell>
        </StatusBar>
    </Window>
)

export default App
